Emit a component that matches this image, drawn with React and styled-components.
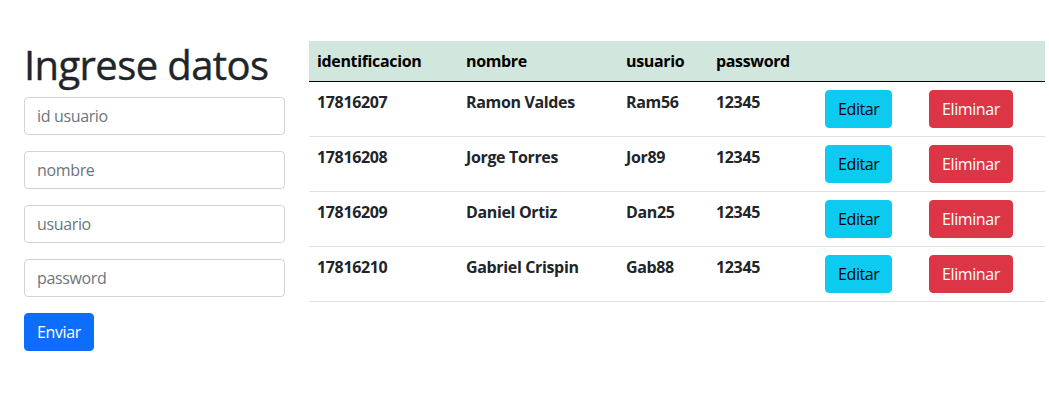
import React from 'react'
import styled, {createGlobalStyle} from 'styled-components'

const GlobalStyle = createGlobalStyle`
    body{
        margin: 0;
        background: #fff;
        color: #212529;
        font-family: 'Open Sans', 'Liberation Sans', sans-serif;
        font-size: 16px;
        line-height: 1.5;
        letter-spacing: -0.35px;
    }
    *{
        box-sizing: border-box;
    }
`

const usuarios = [
    {id: '17816207', nombre: 'Ramon Valdes', usuario: 'Ram56', password: '12345'},
    {id: '17816208', nombre: 'Jorge Torres', usuario: 'Jor89', password: '12345'},
    {id: '17816209', nombre: 'Daniel Ortiz', usuario: 'Dan25', password: '12345'},
    {id: '17816210', nombre: 'Gabriel Crispin', usuario: 'Gab88', password: '12345'},
]

const columnas = [
    {label: 'identificacion', width: 149},
    {label: 'nombre', width: 160},
    {label: 'usuario', width: 90},
    {label: 'password', width: 109},
    {label: '', width: 104},
    {label: '', width: 124},
]

export default function App() {
    return (
        <Page>
            <GlobalStyle/>
            <FormColumn>
                <Title>Ingrese datos</Title>
                <Input placeholder="id usuario"/>
                <Input placeholder="nombre"/>
                <Input placeholder="usuario"/>
                <Input placeholder="password"/>
                <Button variant="primary">Enviar</Button>
            </FormColumn>
            <TableColumn>
                <Table>
                    <thead>
                        <HeadRow>
                            {columnas.map((c, i) => (
                                <HeadCell key={i} style={{width: c.width}}>{c.label}</HeadCell>
                            ))}
                        </HeadRow>
                    </thead>
                    <tbody>
                        {usuarios.map(u => (
                            <tr key={u.id}>
                                <Cell>{u.id}</Cell>
                                <Cell>{u.nombre}</Cell>
                                <Cell>{u.usuario}</Cell>
                                <Cell>{u.password}</Cell>
                                <Cell><Button variant="info">Editar</Button></Cell>
                                <Cell><Button variant="danger">Eliminar</Button></Cell>
                            </tr>
                        ))}
                    </tbody>
                </Table>
            </TableColumn>
        </Page>
    )
}

const Page = styled.div`
    display: flex;
    gap: 24px;
    padding: 41px 4px 0 24px;
`
const FormColumn = styled.div`
    width: 261px;
    flex: none;
`
const Title = styled.h1`
    font-size: 40px;
    font-weight: 500;
    line-height: 1.2;
    letter-spacing: -0.6px;
    margin: 0 0 8px;
    color: #212529;
    -webkit-text-stroke: 0.4px #212529;
`
const Input = styled.input`
    display: block;
    width: 100%;
    height: 38px;
    margin-bottom: 16px;
    padding: 6px 12px;
    font-family: inherit;
    font-size: 16px;
    line-height: 1.5;
    letter-spacing: inherit;
    color: #212529;
    background: #fff;
    border: 1px solid #ced4da;
    border-radius: 4px;
    outline: none;
    &::placeholder{
        color: #6c757d;
    }
`
const colores = {
    primary: {bg: '#0d6efd', fg: '#fff'},
    info: {bg: '#0dcaf0', fg: '#000'},
    danger: {bg: '#dc3545', fg: '#fff'},
}
const Button = styled.button`
    display: inline-block;
    height: 38px;
    padding: 6px 12px;
    font-family: inherit;
    font-size: 16px;
    font-weight: 400;
    line-height: 1.5;
    letter-spacing: -0.4px;
    border: 1px solid ${p => colores[p.variant].bg};
    border-radius: 4px;
    background: ${p => colores[p.variant].bg};
    color: ${p => colores[p.variant].fg};
    cursor: pointer;
`
const TableColumn = styled.div`
    flex: 1;
`
const Table = styled.table`
    width: 100%;
    border-collapse: collapse;
    table-layout: fixed;
`
const HeadRow = styled.tr`
    background: #d1e7dd;
    color: #000;
`
const HeadCell = styled.th`
    text-align: left;
    font-weight: 700;
    padding: 8px;
    border-bottom: 1px solid #000;
    vertical-align: bottom;
`
const Cell = styled.td`
    padding: 8px;
    font-weight: 700;
    vertical-align: top;
    border-bottom: 1px solid #dee2e6;
`
